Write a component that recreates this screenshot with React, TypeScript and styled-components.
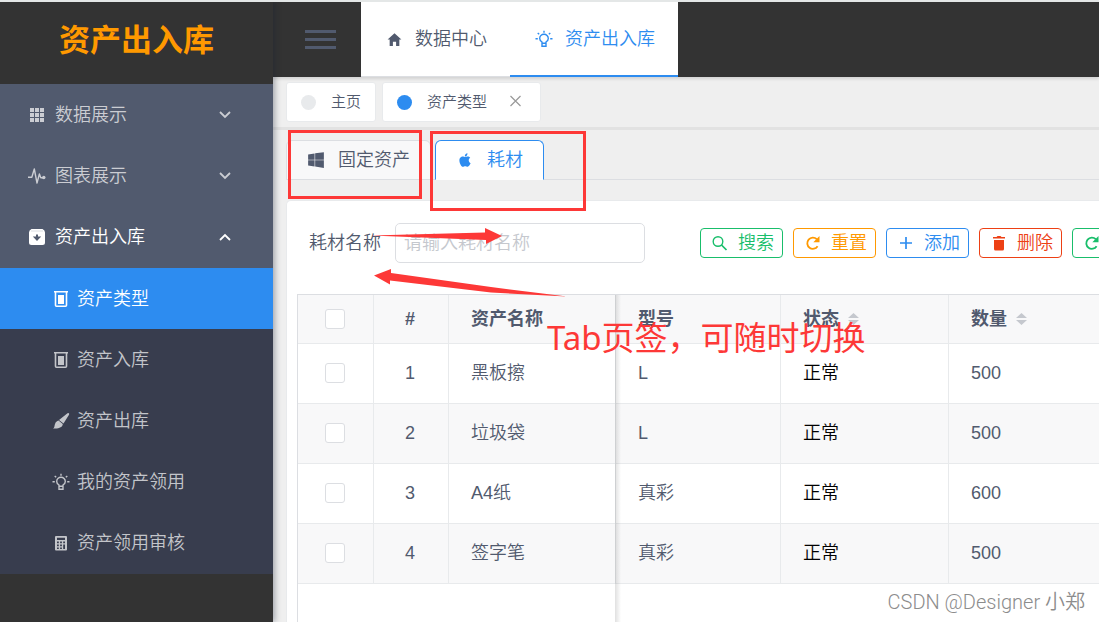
import React from "react";
import styled, { createGlobalStyle, css } from "styled-components";
import { IoLogoApple, IoLogoWindows, IoMdHome } from "react-icons/io";

const color = {
  dark: "#333333",
  menu: "#515a6e",
  submenu: "#383d4e",
  primary: "#2d8cf0",
  success: "#19be6b",
  warning: "#ff9900",
  error: "#ed4014",
  text: "#515a6e",
  border: "#dcdee2",
  line: "#e8eaec",
  page: "#efefef",
  mark: "#fd3837",
};

const GlobalStyle = createGlobalStyle`
  * { box-sizing: border-box; }
  body {
    margin: 0;
    overflow: hidden;
    background: ${color.page};
    color: ${color.text};
    font-family: "Liberation Sans", "Noto Sans CJK SC", sans-serif;
    font-size: 18px;
    font-weight: 350;
    line-height: 24px;
  }
  button, input { font: inherit; color: inherit; }
  a { color: inherit; text-decoration: none; }
  svg { display: block; flex: none; }
`;

const Page = styled.div`
  position: relative;
  display: flex;
  height: 100vh;
  border-top: 2px solid #e4e7e7;
  overflow: hidden;
`;

const Sidebar = styled.aside`
  flex: none;
  width: 273px;
  background: ${color.dark};
  box-shadow: 2px 0 6px rgba(20, 30, 50, 0.35);
  z-index: 1;
`;

const Logo = styled.div`
  height: 82px;
  padding-top: 16px;
  text-align: center;
  font-size: 31px;
  font-weight: 700;
  line-height: 46px;
  color: ${color.warning};
`;

const MenuTitle = styled.button<{ $open?: boolean }>`
  display: flex;
  align-items: center;
  gap: 9px;
  width: 100%;
  height: ${(p) => (p.$open ? 62 : 61)}px;
  padding: 0 41px 0 28px;
  border: 0;
  text-align: left;
  background: ${color.menu};
  color: ${(p) => (p.$open ? "#ffffff" : "#cbcdd3")};
`;

const Grow = styled.span`
  flex: 1;
`;

const SubMenu = styled.nav`
  padding-bottom: 1px;
  background: ${color.submenu};
`;

const SubItem = styled.a<{ $active?: boolean }>`
  display: flex;
  align-items: center;
  gap: 7px;
  height: 61px;
  padding-left: 52px;
  color: ${(p) => (p.$active ? "#ffffff" : "#c3c5ca")};
  background: ${(p) => (p.$active ? color.primary : "transparent")};
`;

const Main = styled.div`
  flex: 1;
  min-width: 0;
  display: flex;
  flex-direction: column;
`;

const Header = styled.header`
  flex: none;
  display: flex;
  height: 75px;
  background: ${color.dark};
  box-shadow: 0 2px 3px rgba(0, 0, 0, 0.12);
`;

const Burger = styled.button`
  display: flex;
  flex-direction: column;
  justify-content: center;
  gap: 5px;
  width: 88px;
  padding: 0 25px 0 32px;
  border: 0;
  background: transparent;
`;

const BurgerLine = styled.span`
  height: 3px;
  background: ${color.text};
`;

const NavLink = styled.a<{ $active?: boolean }>`
  display: flex;
  align-items: center;
  gap: 12px;
  padding: 0 23px 0 25px;
  background: #ffffff;
  color: ${(p) => (p.$active ? color.primary : color.text)};
  border-bottom: ${(p) => (p.$active ? `2px solid ${color.primary}` : `1px solid ${color.border}`)};
`;

const Tags = styled.div`
  flex: none;
  display: flex;
  align-items: center;
  gap: 6px;
  height: 53px;
  padding-left: 13px;
  border-bottom: 3px solid #e2e2e2;
`;

const Tag = styled.div`
  display: flex;
  align-items: center;
  height: 40px;
  padding: 0 14px;
  border: 1px solid ${color.line};
  border-radius: 3px;
  background: #ffffff;
  font-size: 15px;
`;

const Dot = styled.span<{ $on?: boolean }>`
  width: 15px;
  height: 15px;
  margin-right: 15px;
  border-radius: 50%;
  background: ${(p) => (p.$on ? color.primary : color.line)};
`;

const CloseButton = styled.button`
  display: flex;
  margin-left: 18px;
  padding: 0;
  border: 0;
  background: transparent;
  color: #999999;
`;

const TabList = styled.div`
  flex: none;
  display: flex;
  gap: 4px;
  height: 40px;
  margin: 10px 0 20px 13px;
  box-shadow: inset 0 -1px ${color.border};
`;

const Tab = styled.button<{ $active?: boolean }>`
  display: flex;
  align-items: center;
  gap: 13px;
  padding: 0 20px;
  border: 1px solid ${(p) => (p.$active ? color.primary : color.border)};
  border-bottom-color: ${(p) => (p.$active ? "#ffffff" : color.border)};
  border-radius: 6px 6px 0 0;
  background: ${(p) => (p.$active ? "#ffffff" : "#f8f8f9")};
  color: ${(p) => (p.$active ? color.primary : color.text)};
`;

const Card = styled.section`
  flex: 1;
  display: flex;
  flex-direction: column;
  margin-left: 13px;
  padding: 22px 0 0 10px;
  border: 1px solid ${color.line};
  border-right: 0;
  border-bottom: 0;
  border-radius: 5px 0 0 0;
  background: #ffffff;
  overflow: hidden;
`;

const Form = styled.form`
  flex: none;
  display: flex;
  align-items: center;
  margin-bottom: 31px;
  padding-left: 12px;
`;

const NameInput = styled.input`
  flex: none;
  width: 250px;
  height: 40px;
  margin: 0 55px 0 14px;
  padding: 0 8px;
  border: 1px solid ${color.border};
  border-radius: 5px;
  background: #ffffff;
  &::placeholder { color: #c5c8ce; opacity: 1; }
`;

const Label = styled.label`
  flex: none;
`;

const Buttons = styled.div`
  display: flex;
  gap: 10px;
`;

const ActionButton = styled.button<{ $tone: string }>`
  flex: none;
  display: flex;
  align-items: center;
  justify-content: space-between;
  width: 83px;
  height: 30px;
  padding: 0 8px 0 10px;
  border: 1px solid ${(p) => p.$tone};
  border-radius: 4px;
  background: #ffffff;
  color: ${(p) => p.$tone};
  white-space: nowrap;
`;

const TableWrap = styled.div`
  position: relative;
  flex: 1;
  border-top: 1px solid ${color.border};
  border-left: 1px solid ${color.border};
  &::after {
    content: "";
    position: absolute;
    top: 0;
    bottom: 0;
    left: 317px;
    width: 6px;
    background: linear-gradient(90deg, rgba(0, 0, 0, 0.12), rgba(0, 0, 0, 0));
  }
`;

const Table = styled.table`
  width: 818px;
  table-layout: fixed;
  border-collapse: separate;
  border-spacing: 0;
`;

const Row = styled.tr<{ $stripe?: boolean }>`
  height: 60px;
  background: ${(p) => (p.$stripe ? "#f8f8f9" : "#ffffff")};
`;

const HeadRow = styled.tr`
  height: 49px;
  background: #f8f8f9;
`;

const cell = css<{ $center?: boolean; $strong?: boolean }>`
  border-right: 1px solid ${color.line};
  border-bottom: 1px solid ${color.line};
  text-align: ${(p) => (p.$center ? "center" : "left")};
`;

const Th = styled.th<{ $center?: boolean }>`
  ${cell}
  padding: ${(p) => (p.$center ? "0 2px 0 0" : "0 0 0 22px")};
  font-weight: 700;
`;

const Td = styled.td<{ $center?: boolean; $strong?: boolean }>`
  ${cell}
  padding: ${(p) => (p.$center ? "0 2px 2px 0" : "0 0 2px 22px")};
  color: ${(p) => (p.$strong ? "#000000" : color.text)};
`;

const Sortable = styled.span`
  display: inline-flex;
  align-items: center;
  gap: 9px;
`;

const Check = styled.input`
  appearance: none;
  display: block;
  width: 20px;
  height: 20px;
  margin: 0 auto;
  border: 1px solid ${color.border};
  border-radius: 3px;
  background: #ffffff;
`;

const Marks = styled.svg`
  position: absolute;
  top: -2px;
  left: 0;
  z-index: 2;
  pointer-events: none;
`;

const Note = styled.p`
  position: absolute;
  top: 312px;
  left: 547px;
  z-index: 2;
  margin: 0;
  font-family: "Noto Sans", "Noto Sans CJK SC", sans-serif;
  font-size: 33px;
  font-weight: 400;
  line-height: 48px;
  white-space: nowrap;
  color: ${color.mark};
`;

const Watermark = styled.p`
  position: absolute;
  right: 14px;
  bottom: 6px;
  z-index: 2;
  margin: 0;
  font-family: Roboto, "Noto Sans CJK SC", sans-serif;
  font-size: 20px;
  line-height: 28px;
  color: #8c8c8c;
`;

const Icon = ({ size = 18, children }: { size?: number; children: React.ReactNode }) => (
  <svg width={size} height={size} viewBox="0 0 18 18" fill="none" stroke="currentColor" strokeWidth="1.4">
    {children}
  </svg>
);

const GridIcon = () => (
  <Icon>
    <path
      fill="currentColor"
      stroke="none"
      d="M2 2h4v4H2zM7 2h4v4H7zM12 2h4v4h-4zM2 7h4v4H2zM7 7h4v4H7zM12 7h4v4h-4zM2 12h4v4H2zM7 12h4v4H7zM12 12h4v4h-4z"
    />
  </Icon>
);

const PulseIcon = () => (
  <Icon>
    <path d="M0 10.200h3.800L6.300 2l2.700 14 2.400-9 1.400 3.800h2.500" strokeLinejoin="round" />
    <circle cx="15.800" cy="10.500" r="1.700" fill="currentColor" stroke="none" />
  </Icon>
);

const StoreIcon = () => (
  <Icon>
    <path
      fill="currentColor"
      stroke="none"
      fillRule="evenodd"
      d="M3.500 1h11q2.500 1 2.500 3.500V14.500Q17 17 14.500 17h-11Q1 17 1 14.500V4.500Q1 2 3.500 1zM8 6.500v2H4.800L9 13l4.200-4.500H10v-2z"
    />
    <path d="M3 3h12" stroke={color.border} strokeWidth="1" />
  </Icon>
);

const BrushIcon = () => (
  <Icon>
    <path
      fill="currentColor"
      stroke="none"
      d="M16.500 1q1.200.5.500 1.800L11.500 11.500 7 8 15.500 1.300zM6.500 8.600l4.300 3.500c-.2 3.200-4 5-9.800 4.400 1.800-.8 1.300-2.800 2-4.500.8-1.900 1.800-3 3.500-3.400z"
    />
  </Icon>
);

const CalculatorIcon = () => (
  <Icon>
    <path
      fill="currentColor"
      stroke="none"
      fillRule="evenodd"
      d="M4 2h10q1 0 1 1v12.500q0 1-1 1H4q-1 0-1-1V3q0-1 1-1zm1 1.800V6h8V3.800zM5 7.500v1.800h1.800V7.500zm3.100 0v1.800h1.800V7.500zm3.100 0v1.800H13V7.500zM5 10.500v1.800h1.800v-1.800zm3.100 0v1.800h1.800v-1.800zm3.100 0v4.500H13v-4.500zM5 13.400V15h1.800v-1.600zm3.100 0V15h1.800v-1.600z"
    />
  </Icon>
);

const BulbIcon = ({ size = 18 }: { size?: number }) => (
  <Icon size={size}>
    <path d="M7 13.300V12C5.500 11.200 4.700 10 4.700 8.600a4.300 4.300 0 0 1 8.600 0c0 1.400-.8 2.600-2.300 3.400v1.300M7 13.200h4v3H7z" />
    <path d="M9 .8v2M.5 8.800h2.300M15.200 8.800h2.300M2.700 3l1.500 1.300M15.300 3l-1.500 1.300" />
  </Icon>
);

const DeviceIcon = () => (
  <Icon>
    <path strokeWidth="1.600" d="M2 1.800h14M3.500 1.800v13.400q0 1 1 1h9q1 0 1-1V1.800" />
    <path fill="currentColor" stroke="none" d="M6 5h6v9H6z" />
  </Icon>
);

const SearchIcon = () => (
  <Icon>
    <circle cx="7" cy="7.500" r="4.800" />
    <path d="m10.500 11 5 5" strokeWidth="1.700" />
  </Icon>
);

const RefreshIcon = () => (
  <Icon>
    <path strokeWidth="1.800" d="M13.600 12.200A5.600 5.600 0 1 1 12.800 5.200" />
    <path fill="currentColor" stroke="none" d="M15.500 2v6.200H9.300z" />
  </Icon>
);

const AddIcon = () => (
  <Icon>
    <path strokeWidth="1.700" d="M9 3v12M3 9h12" />
  </Icon>
);

const TrashIcon = () => (
  <Icon>
    <path
      fill="currentColor"
      stroke="none"
      d="M4 6h10v9q0 1.500-1.500 1.500h-7Q4 16.500 4 15zM3 3h3.500l1-1h3l1 1H15v1.600H3z"
    />
  </Icon>
);

const ChevronIcon = ({ up }: { up?: boolean }) => (
  <svg width="14" height="14" viewBox="0 0 14 14" fill="none" stroke="currentColor" strokeWidth="1.800">
    <path d={up ? "M2 10l5-5 5 5" : "M2 4l5 5 5-5"} />
  </svg>
);

const CloseIcon = () => (
  <svg width="21" height="20" viewBox="0 0 21 20" fill="none" stroke="currentColor" strokeWidth="1.200">
    <path d="M5.500 4l10 10M15.500 4l-10 10" />
  </svg>
);

const SortIcon = () => (
  <svg width="11" height="14" viewBox="0 0 11 14" fill="#c5c8ce">
    <path d="M0 6 5.500 1 11 6zM0 8h11l-5.500 5z" />
  </svg>
);

const subItems = [
  { label: "资产类型", icon: <DeviceIcon />, active: true },
  { label: "资产入库", icon: <DeviceIcon /> },
  { label: "资产出库", icon: <BrushIcon /> },
  { label: "我的资产领用", icon: <BulbIcon /> },
  { label: "资产领用审核", icon: <CalculatorIcon /> },
];

const actions = [
  { label: "搜索", tone: color.success, icon: <SearchIcon /> },
  { label: "重置", tone: color.warning, icon: <RefreshIcon /> },
  { label: "添加", tone: color.primary, icon: <AddIcon /> },
  { label: "删除", tone: color.error, icon: <TrashIcon /> },
];

const rows = [
  { name: "黑板擦", model: "L", count: 500 },
  { name: "垃圾袋", model: "L", count: 500 },
  { name: "A4纸", model: "真彩", count: 600 },
  { name: "签字笔", model: "真彩", count: 500 },
];

const columnWidths = [76, 75, 167, 165, 168, 167];

export default function App() {
  return (
    <>
      <GlobalStyle />
      <Page>
        <Sidebar>
          <Logo>资产出入库</Logo>
          <MenuTitle type="button">
            <GridIcon />
            <Grow>数据展示</Grow>
            <ChevronIcon />
          </MenuTitle>
          <MenuTitle type="button">
            <PulseIcon />
            <Grow>图表展示</Grow>
            <ChevronIcon />
          </MenuTitle>
          <MenuTitle type="button" $open>
            <StoreIcon />
            <Grow>资产出入库</Grow>
            <ChevronIcon up />
          </MenuTitle>
          <SubMenu>
            {subItems.map((item) => (
              <SubItem key={item.label} href="#" $active={item.active}>
                {item.icon}
                {item.label}
              </SubItem>
            ))}
          </SubMenu>
        </Sidebar>

        <Main>
          <Header>
            <Burger type="button" aria-label="菜单">
              <BurgerLine />
              <BurgerLine />
              <BurgerLine />
            </Burger>
            <NavLink href="#">
              <IoMdHome size={17} />
              数据中心
            </NavLink>
            <NavLink href="#" $active>
              <BulbIcon />
              资产出入库
            </NavLink>
          </Header>

          <Tags>
            <Tag>
              <Dot />
              主页
            </Tag>
            <Tag>
              <Dot $on />
              资产类型
              <CloseButton type="button" aria-label="关闭">
                <CloseIcon />
              </CloseButton>
            </Tag>
          </Tags>

          <TabList role="tablist">
            <Tab type="button" role="tab">
              <IoLogoWindows size={18} />
              固定资产
            </Tab>
            <Tab type="button" role="tab" aria-selected $active>
              <IoLogoApple size={18} />
              耗材
            </Tab>
          </TabList>

          <Card>
            <Form>
              <Label htmlFor="name">耗材名称</Label>
              <NameInput id="name" type="text" placeholder="请输入耗材名称" />
              <Buttons>
                {actions.map((a) => (
                  <ActionButton key={a.label} type="button" $tone={a.tone}>
                    {a.icon}
                    {a.label}
                  </ActionButton>
                ))}
                <ActionButton type="button" aria-label="刷新" $tone={color.success}>
                  <RefreshIcon />
                </ActionButton>
              </Buttons>
            </Form>

            <TableWrap>
              <Table>
                <colgroup>
                  {columnWidths.map((w, i) => (
                    <col key={i} width={w} />
                  ))}
                </colgroup>
                <thead>
                  <HeadRow>
                    <Th $center>
                      <Check type="checkbox" aria-label="全选" />
                    </Th>
                    <Th $center>#</Th>
                    <Th>资产名称</Th>
                    <Th>型号</Th>
                    <Th>
                      <Sortable>
                        状态
                        <SortIcon />
                      </Sortable>
                    </Th>
                    <Th>
                      <Sortable>
                        数量
                        <SortIcon />
                      </Sortable>
                    </Th>
                  </HeadRow>
                </thead>
                <tbody>
                  {rows.map((r, i) => (
                    <Row key={r.name} $stripe={i % 2 === 1}>
                      <Td $center>
                        <Check type="checkbox" aria-label={r.name} />
                      </Td>
                      <Td $center>{i + 1}</Td>
                      <Td>{r.name}</Td>
                      <Td>{r.model}</Td>
                      <Td $strong>正常</Td>
                      <Td>{r.count}</Td>
                    </Row>
                  ))}
                </tbody>
              </Table>
            </TableWrap>
          </Card>
        </Main>

        <Marks width="620" height="320" viewBox="0 0 620 320">
          <g fill="none" stroke={color.mark} strokeWidth="3">
            <rect x="289.500" y="131.500" width="131" height="66" />
            <rect x="431.500" y="132.500" width="153" height="77" />
          </g>
          <g fill={color.mark}>
            <path d="M371 235.500 485 232.500V228L502 236l-16 8v-4z" />
            <path d="M374 275.500 391 269v4l100 14 76 9.500-76-4-101-12v4z" />
          </g>
        </Marks>
        <Note>Tab页签，可随时切换</Note>
        <Watermark>CSDN @Designer 小郑</Watermark>
      </Page>
    </>
  );
}
